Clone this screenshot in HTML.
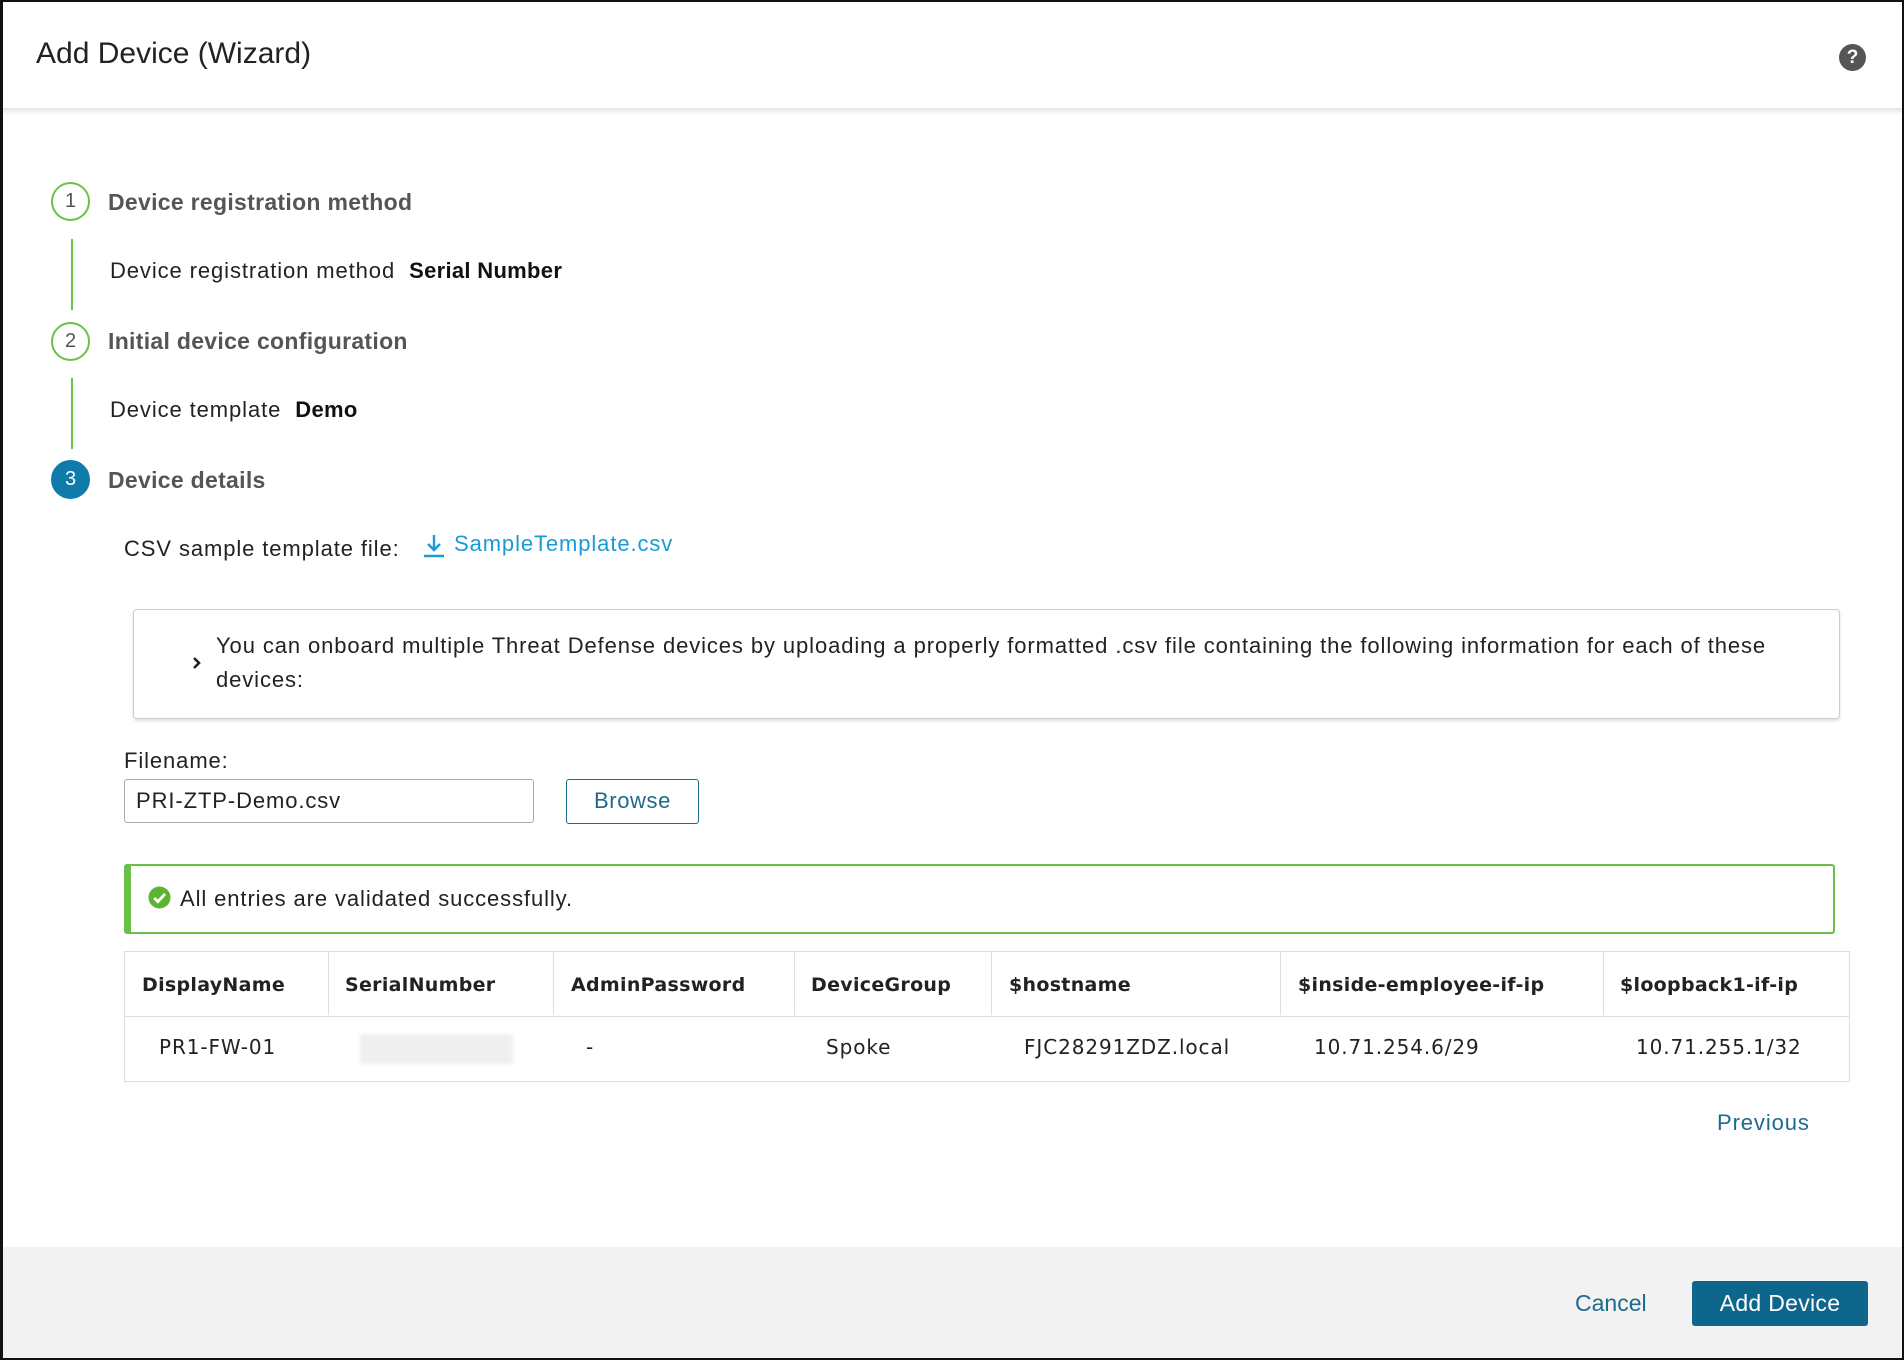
<!DOCTYPE html>
<html><head><meta charset="utf-8"><style>
*{box-sizing:border-box;margin:0;padding:0}
body{width:1904px;height:1360px;background:#fff;font-family:"Liberation Sans",Arial,sans-serif;color:#222;position:relative;overflow:hidden}
.a{position:absolute;white-space:nowrap}
.frame{position:absolute;left:0;top:0;width:1904px;height:1360px;border:2px solid #111;border-left-width:3px;pointer-events:none}
.circ{position:absolute;width:39px;height:39px;border-radius:50%;border:2px solid #6cc04a;font-size:20px;color:#555;text-align:center;line-height:35px;background:#fff}
.vline{position:absolute;left:71px;width:2px;background:#6cc04a}
.st{font-weight:bold;font-size:23px;color:#555;line-height:30px;letter-spacing:0.3px}
.lbl{font-size:22px;line-height:30px;color:#222;letter-spacing:0.9px}
.th{font-family:"DejaVu Sans",Verdana,sans-serif;font-weight:bold;font-size:19px;color:#222;line-height:26px;letter-spacing:0.3px}
.td{font-family:"DejaVu Sans",Verdana,sans-serif;font-size:20px;color:#222;line-height:26px;letter-spacing:0.9px}
.vc{position:absolute;top:952px;height:63px;width:1px;background:#ddd}
</style></head><body>
<div class="a" style="left:0;top:0;width:1904px;height:108px;background:#fff;box-shadow:0 3px 5px rgba(0,0,0,0.12)"></div>
<div class="a" style="left:36px;top:36px;font-size:30px;color:#222;line-height:36px">Add Device (Wizard)</div>
<div class="a" style="left:1839px;top:44px;width:27px;height:27px;border-radius:50%;background:#555;color:#fff;font-weight:bold;font-size:19px;text-align:center;line-height:27px">?</div>

<div class="circ" style="left:51px;top:182px">1</div>
<div class="a st" style="left:108px;top:187px">Device registration method</div>
<div class="vline" style="top:239px;height:71px"></div>
<div class="a lbl" style="left:110px;top:256px">Device registration method&nbsp;&nbsp;<b style="color:#111;letter-spacing:0.3px">Serial Number</b></div>

<div class="circ" style="left:51px;top:322px">2</div>
<div class="a st" style="left:108px;top:326px">Initial device configuration</div>
<div class="vline" style="top:378px;height:71px"></div>
<div class="a lbl" style="left:110px;top:395px">Device template&nbsp;&nbsp;<b style="color:#111;letter-spacing:0.3px">Demo</b></div>

<div class="circ" style="left:51px;top:460px;background:#0f7bab;border-color:#0f7bab;color:#fff">3</div>
<div class="a st" style="left:108px;top:465px">Device details</div>

<div class="a lbl" style="left:124px;top:534px">CSV sample template file:</div>
<svg class="a" style="left:422px;top:532px" width="24" height="26" viewBox="0 0 24 26"><path d="M12 3v15M6 12l6 6 6-6" stroke="#1a9bd7" stroke-width="2.4" fill="none"/><path d="M2 24h20" stroke="#1a9bd7" stroke-width="2.4"/></svg>
<div class="a lbl" style="left:454px;top:529px;color:#1a9bd7">SampleTemplate.csv</div>

<div class="a" style="left:133px;top:609px;width:1707px;height:110px;border:1px solid #ccc;border-radius:4px;box-shadow:0 2px 3px rgba(0,0,0,0.12)"></div>
<svg class="a" style="left:191px;top:655px" width="12" height="16" viewBox="0 0 12 16"><path d="M3 3l5 5-5 5" stroke="#222" stroke-width="2.6" fill="none"/></svg>
<div class="a lbl" style="left:216px;top:631px">You can onboard multiple Threat Defense devices by uploading a properly formatted .csv file containing the following information for each of these</div>
<div class="a lbl" style="left:216px;top:665px">devices:</div>

<div class="a lbl" style="left:124px;top:746px">Filename:</div>
<div class="a" style="left:124px;top:779px;width:410px;height:44px;border:1px solid #aaa;border-radius:3px"></div>
<div class="a lbl" style="left:136px;top:786px">PRI-ZTP-Demo.csv</div>
<div class="a" style="left:566px;top:779px;width:133px;height:45px;border:1.5px solid #1d6a8c;border-radius:3px;color:#1d6a8c;font-size:22px;text-align:center;line-height:42px;letter-spacing:0.6px">Browse</div>

<div class="a" style="left:124px;top:864px;width:1711px;height:70px;border:2px solid #6cc04a;border-left-width:7px;border-radius:3px"></div>
<svg class="a" style="left:148px;top:886px" width="23" height="23" viewBox="0 0 24 24"><circle cx="12" cy="12" r="11.5" fill="#5cb531"/><path d="M6.5 12.5l3.8 3.8 7.5-8" stroke="#fff" stroke-width="3" fill="none"/></svg>
<div class="a lbl" style="left:180px;top:884px">All entries are validated successfully.</div>

<div class="a" style="left:124px;top:951px;width:1726px;height:131px;border:1px solid #ddd"></div>
<div class="a" style="left:124px;top:1016px;width:1726px;height:1px;background:#ddd"></div>
<div class="vc" style="left:328px"></div><div class="vc" style="left:553px"></div><div class="vc" style="left:794px"></div><div class="vc" style="left:991px"></div><div class="vc" style="left:1280px"></div><div class="vc" style="left:1603px"></div>
<div class="a th" style="left:142px;top:972px">DisplayName</div>
<div class="a th" style="left:345px;top:972px">SerialNumber</div>
<div class="a th" style="left:571px;top:972px">AdminPassword</div>
<div class="a th" style="left:811px;top:972px">DeviceGroup</div>
<div class="a th" style="left:1009px;top:972px">$hostname</div>
<div class="a th" style="left:1298px;top:972px">$inside-employee-if-ip</div>
<div class="a th" style="left:1620px;top:972px">$loopback1-if-ip</div>
<div class="a td" style="left:159px;top:1034px">PR1-FW-01</div>
<div class="a" style="left:360px;top:1034px;width:153px;height:30px;background:#efefef;filter:blur(2px)"></div>
<div class="a td" style="left:586px;top:1034px">-</div>
<div class="a td" style="left:826px;top:1034px">Spoke</div>
<div class="a td" style="left:1024px;top:1034px">FJC28291ZDZ.local</div>
<div class="a td" style="left:1314px;top:1034px">10.71.254.6/29</div>
<div class="a td" style="left:1636px;top:1034px">10.71.255.1/32</div>

<div class="a" style="left:1717px;top:1108px;font-size:22px;color:#1d6a8c;line-height:30px;letter-spacing:0.9px">Previous</div>

<div class="a" style="left:0;top:1247px;width:1904px;height:113px;background:#f2f2f2"></div>
<div class="a" style="left:1575px;top:1288px;font-size:23px;color:#1d6a8c;line-height:30px">Cancel</div>
<div class="a" style="left:1692px;top:1281px;width:176px;height:45px;background:#0e668c;border-radius:3px;color:#fff;font-size:23px;text-align:center;line-height:45px;letter-spacing:0.3px">Add Device</div>
<div class="frame"></div>
</body></html>
